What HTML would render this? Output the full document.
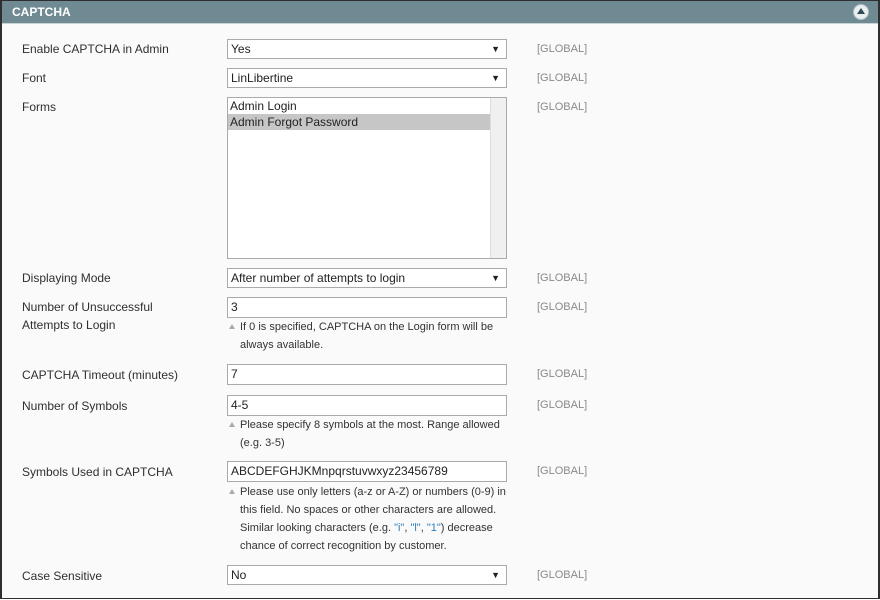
<!DOCTYPE html><html><head><style>
body{margin:0;width:880px;height:600px;overflow:hidden;font-family:"Liberation Sans",Arial,sans-serif;}
#w{position:absolute;left:0;top:0;width:876px;height:597px;border:2px solid #2e2e2e;border-top:1px solid #2e2e2e;border-bottom:1px solid #2e2e2e;background:#fafafa;}
#h{position:absolute;left:0;top:0;width:876px;height:22px;background:#6f8a93;border-bottom:1px solid #c8d2d5;}
#h span{position:absolute;left:10px;top:4px;color:#fff;font-weight:bold;font-size:12px;}
#btn{position:absolute;left:851px;top:3px;width:14px;height:14px;border-radius:50%;background:#e8eef0;border:1px solid #b0c0c5;}
#btn:after{content:"";position:absolute;left:3px;top:3px;border-left:4px solid transparent;border-right:4px solid transparent;border-bottom:6px solid #2f4a55;}
.l{position:absolute;left:22px;font-size:12px;color:#2f2f2f;line-height:18px;margin-top:1px;}
.g{position:absolute;left:537px;font-size:11px;color:#8a8a8a;margin-top:1px;}
.f{position:absolute;left:227px;width:278px;height:18px;border:1px solid #aaa;background:#fff;font-size:12px;line-height:18px;text-indent:3px;color:#222;}
.s:after{content:"▼";position:absolute;right:6px;top:0;font-size:9px;color:#222;}
.n{position:absolute;left:240px;font-size:11px;color:#333;line-height:18px;width:280px;}
.n:before{content:"";position:absolute;left:-11px;top:6px;border-left:3px solid transparent;border-right:3px solid transparent;border-bottom:5px solid #aaa;}
</style></head><body><div id="w">
<div id="h"><span>CAPTCHA</span><div id="btn"></div></div>
</div>
<div class="l" style="top:39px">Enable CAPTCHA in Admin</div><div class="f s" style="top:39px">Yes</div><div class="g" style="top:42px">[GLOBAL]</div>
<div class="l" style="top:68px">Font</div><div class="f s" style="top:68px">LinLibertine</div><div class="g" style="top:71px">[GLOBAL]</div>
<div class="l" style="top:97px">Forms</div>
<div class="f" style="top:97px;height:160px;text-indent:0">
<div style="padding-left:2px;height:16px;line-height:16px">Admin Login</div>
<div style="padding-left:2px;height:16px;line-height:16px;background:#c6c6c6;width:261px">Admin Forgot Password</div>
<div style="position:absolute;right:0;top:0;width:15px;height:160px;background:#f0f0f0;border-left:1px solid #ddd"></div></div>
<div class="g" style="top:100px">[GLOBAL]</div>
<div class="l" style="top:268px">Displaying Mode</div><div class="f s" style="top:268px">After number of attempts to login</div><div class="g" style="top:271px">[GLOBAL]</div>
<div class="l" style="top:297px">Number of Unsuccessful<br>Attempts to Login</div><div class="f" style="top:297px;height:19px">3</div><div class="g" style="top:300px">[GLOBAL]</div>
<div class="n" style="top:318px">If 0 is specified, CAPTCHA on the Login form will be<br>always available.</div>
<div class="l" style="top:365px">CAPTCHA Timeout (minutes)</div><div class="f" style="top:364px;height:19px">7</div><div class="g" style="top:367px">[GLOBAL]</div>
<div class="l" style="top:396px">Number of Symbols</div><div class="f" style="top:395px;height:19px">4-5</div><div class="g" style="top:398px">[GLOBAL]</div>
<div class="n" style="top:416px">Please specify 8 symbols at the most. Range allowed<br>(e.g. 3-5)</div>
<div class="l" style="top:462px">Symbols Used in CAPTCHA</div><div class="f" style="top:461px;height:19px">ABCDEFGHJKMnpqrstuvwxyz23456789</div><div class="g" style="top:464px">[GLOBAL]</div>
<div class="n" style="top:483px">Please use only letters (a-z or A-Z) or numbers (0-9) in<br>this field. No spaces or other characters are allowed.<br>Similar looking characters (e.g. <span style="color:#2a7ec0">"i"</span>, <span style="color:#2a7ec0">"l"</span>, <span style="color:#2a7ec0">"1"</span>) decrease<br>chance of correct recognition by customer.</div>
<div class="l" style="top:566px">Case Sensitive</div><div class="f s" style="top:565px">No</div><div class="g" style="top:568px">[GLOBAL]</div>
</body></html>
